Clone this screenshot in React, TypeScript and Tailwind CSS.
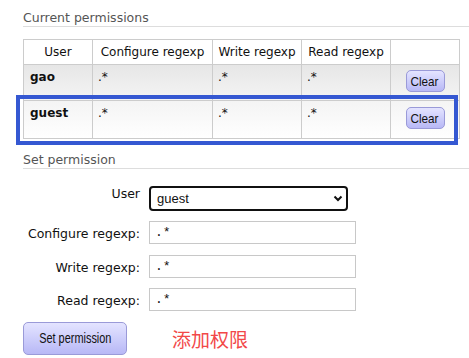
import React from 'react';

const rows = [
  { user: 'gao', conf: '.*', write: '.*', read: '.*' },
  { user: 'guest', conf: '.*', write: '.*', read: '.*' },
];

const btn =
  "rounded-[5px] border border-[#9a9ad8] bg-gradient-to-b from-[#e4e4ff] to-[#b8b8f6] text-[#111] font-['Liberation_Sans',sans-serif]";

function App() {
  return (
    <div className="relative w-[469px] h-[358px] overflow-hidden bg-white pl-[23px] font-['DejaVu_Sans',sans-serif] text-[12px] text-[#111]">
      <h2 className="mt-[10px] border-b border-[#ddd] pb-[1px] text-[12.5px] leading-[15px] text-[#555]">
        Current permissions
      </h2>

      <table className="mt-[12px] w-[436px] table-fixed border-collapse">
        <colgroup>
          <col className="w-[69px]" />
          <col className="w-[120px]" />
          <col className="w-[89px]" />
          <col className="w-[89px]" />
          <col className="w-[69px]" />
        </colgroup>
        <thead>
          <tr className="h-[25px] bg-white">
            <th className="border border-[#ccc] p-0 text-center font-normal leading-[15px]">User</th>
            <th className="border border-[#ccc] p-0 text-center font-normal leading-[15px]">Configure regexp</th>
            <th className="border border-[#ccc] p-0 text-center font-normal leading-[15px]">Write regexp</th>
            <th className="border border-[#ccc] p-0 text-center font-normal leading-[15px]">Read regexp</th>
            <th className="border border-[#ccc] p-0"></th>
          </tr>
        </thead>
        <tbody>
          {rows.map((r, i) => (
            <tr
              key={r.user}
              className={
                i === 0
                  ? 'h-[36px] bg-gradient-to-b from-[#e6e6e6] to-[#f5f5f5]'
                  : 'h-[38px] bg-gradient-to-b from-[#f4f4f4] to-[#ffffff]'
              }
            >
              <td className="border border-[#ccc] px-[6px] pt-[5px] align-top font-bold leading-[15px]">{r.user}</td>
              <td className="border border-[#ccc] px-[5px] pt-[5px] align-top leading-[15px]">{r.conf}</td>
              <td className="border border-[#ccc] px-[5px] pt-[5px] align-top leading-[15px]">{r.write}</td>
              <td className="border border-[#ccc] px-[5px] pt-[5px] align-top leading-[15px]">{r.read}</td>
              <td className={'border border-[#ccc] p-0 text-center align-top ' + (i === 0 ? 'pt-[5px]' : 'pt-[6px]')}>
                <button className={btn + ' h-[22px] w-[39px] text-[13px] leading-none'}>
                  <span className="inline-block scale-x-[0.9]">Clear</span>
                </button>
              </td>
            </tr>
          ))}
        </tbody>
      </table>

      {/* highlight box around the guest row */}
      <div className="absolute left-[16px] top-[95px] h-[50px] w-[442px] border-4 border-[#3558d2]" />

      <h2 className="mt-[13px] border-b border-[#ddd] pb-[1px] text-[12.5px] leading-[15px] text-[#555]">
        Set permission
      </h2>

      <div className="mt-[17px] grid grid-cols-[117px_1fr] gap-x-[9px] text-[12.5px] leading-[15px]">
        <label className="text-right">User</label>
        <div className="relative h-[25px] w-[199px]">
          <select
            defaultValue="guest"
            className="h-full w-full appearance-none rounded-[4px] border-2 border-[#111] bg-white pl-[6px] text-[13px] text-[#111] font-['Liberation_Sans',sans-serif]"
          >
            <option value="gao">gao</option>
            <option value="guest">guest</option>
          </select>
          <svg
            className="pointer-events-none absolute right-[5px] top-[9px]"
            width="10"
            height="7"
            viewBox="0 0 10 7"
          >
            <path d="M1.5 1.5 L5 5 L8.5 1.5" fill="none" stroke="#111" strokeWidth="2" />
          </svg>
        </div>

        {['Configure regexp:', 'Write regexp:', 'Read regexp:'].map((l, i) => (
          <React.Fragment key={l}>
            <label className={'pt-[5px] text-right ' + (i === 1 ? 'mt-[11px]' : 'mt-[10px]')}>{l}</label>
            <input
              defaultValue=".*"
              className={
                "h-[23px] w-[207px] border border-[#c8c8c8] px-[5px] text-[13px] text-[#111] font-['Liberation_Mono',monospace] outline-none " +
                (i === 1 ? 'mt-[11px]' : 'mt-[10px]')
              }
            />
          </React.Fragment>
        ))}
      </div>

      <div className="mt-[11px] flex items-center">
        <button className={btn + ' h-[33px] w-[104px] text-[14px]'}>
          <span className="inline-block scale-x-[0.78]">Set permission</span>
        </button>
        <span className="ml-[45px] text-[19px] leading-none text-[#f24848] font-['Noto_Sans_CJK_SC',sans-serif]">
          添加权限
        </span>
      </div>
    </div>
  );
}

export default App;
